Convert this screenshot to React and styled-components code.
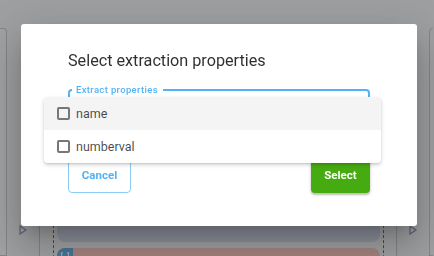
import React from "react";
import styled, { createGlobalStyle } from "styled-components";

const GlobalStyle = createGlobalStyle`
  html, body {
    margin: 0;
    padding: 0;
    width: 434px;
    height: 256px;
    overflow: hidden;
    background: #f3f5f7;
    font-family: Roboto, "Liberation Sans", sans-serif;
  }
  * { box-sizing: border-box; }
`;

const Board = styled.div`
  display: flex;
  height: 256px;
  overflow: hidden;
  padding-top: 28px;
`;

const SideColumn = styled.div`
  width: ${(p) => p.w}px;
  flex-shrink: 0;
  border: 1px solid #c9ccd4;
  border-left: ${(p) => (p.right ? "1px solid #c9ccd4" : "none")};
  border-right: ${(p) => (p.right ? "none" : "1px solid #c9ccd4")};
  border-radius: ${(p) => (p.right ? "4px 0 0 0" : "0 4px 0 0")};
  background: #f7f8fa;
`;

const Connector = styled.div`
  width: 32px;
  flex-shrink: 0;
  display: flex;
  justify-content: center;
  padding-top: 197px;
`;

const Column = styled.div`
  width: 358px;
  flex-shrink: 0;
  border: 1px solid #c9ccd4;
  border-bottom: none;
  border-radius: 4px 4px 0 0;
  background: #f7f8fa;
  padding: 100px 12px 0 13px;
  overflow: hidden;
`;

const Lane = styled.div`
  border-left: 1px dashed #6f737a;
  border-right: 1px dashed #6f737a;
  padding: 21px 3px 0;
  height: 200px;
  display: flex;
  flex-direction: column;
  gap: 6px;
`;

const Card = styled.div`
  height: ${(p) => p.h}px;
  border-radius: 8px;
  background: ${(p) => p.bg};
  flex-shrink: 0;
  display: flex;
  align-items: flex-start;
  overflow: hidden;
`;

const CardIcon = styled.div`
  width: 16px;
  height: 16px;
  background: #6cb6e8;
  display: flex;
  justify-content: center;
  align-items: center;
`;

const Overlay = styled.div`
  position: fixed;
  inset: 0;
  background: rgba(0, 0, 0, 0.35);
  display: flex;
  justify-content: flex-start;
  align-items: flex-start;
  padding: 24px 0 0 21px;
`;

const Dialog = styled.div`
  position: relative;
  width: 396px;
  height: 202px;
  background: #fff;
  border-radius: 3px;
  box-shadow: 0 11px 15px -7px rgba(0, 0, 0, 0.2), 0 24px 38px 3px rgba(0, 0, 0, 0.14),
    0 9px 46px 8px rgba(0, 0, 0, 0.12);
  padding: 24px 47px 33px 47px;
  display: flex;
  flex-direction: column;
`;

const Title = styled.h2`
  margin: 0;
  font-size: 16.2px;
  line-height: 26px;
  font-weight: 400;
  color: rgba(0, 0, 0, 0.82);
`;

const Outline = styled.fieldset`
  margin: 11px 0 0 0;
  height: 60px;
  padding: 0 0 0 2px;
  border: 2px solid #52b3f4;
  border-radius: 4px;
`;

const Legend = styled.legend`
  padding: 0 5px 0 4px;
  font-size: 9.5px;
  line-height: 10px;
  font-weight: 500;
  letter-spacing: 0.35px;
  color: #52b3f4;
`;

const Actions = styled.div`
  margin-top: 12px;
  display: flex;
  justify-content: space-between;
`;

const Button = styled.button`
  height: 36px;
  width: ${(p) => p.w}px;
  border-radius: 4px;
  font-family: Roboto, "Liberation Sans", sans-serif;
  font-size: 11.5px;
  font-weight: 700;
  cursor: pointer;
  border: ${(p) => (p.primary ? "none" : "1px solid #8ccdf7")};
  background: ${(p) => (p.primary ? "#46ab10" : "#fff")};
  color: ${(p) => (p.primary ? "#fff" : "#52b3f4")};
  box-shadow: ${(p) =>
    p.primary
      ? "0 2px 2px rgba(0,0,0,0.2), 0 1px 4px rgba(0,0,0,0.12)"
      : "none"};
`;

const Menu = styled.ul`
  position: absolute;
  left: 23px;
  top: 73px;
  width: 337px;
  margin: 0;
  padding: 0;
  list-style: none;
  background: #fff;
  border-radius: 4px;
  overflow: hidden;
  box-shadow: 0 2px 4px rgba(0, 0, 0, 0.16), 0 1px 2px rgba(0, 0, 0, 0.1);
`;

const Option = styled.li`
  height: 33px;
  display: flex;
  align-items: center;
  gap: 6px;
  padding-left: 13px;
  background: ${(p) => (p.active ? "#f4f4f4" : "#fff")};
  font-size: 12.5px;
  color: rgba(0, 0, 0, 0.72);
`;

const Box = styled.span`
  width: 13px;
  height: 13px;
  border: 2px solid #777;
  border-radius: 2px;
  flex-shrink: 0;
`;

function Triangle() {
  return (
    <svg width="8" height="10" viewBox="0 0 8 10">
      <path d="M1 1 L7 5 L1 9 Z" fill="none" stroke="#8d97b6" strokeWidth="1.2" />
    </svg>
  );
}

function BracketIcon() {
  return (
    <svg width="10" height="10" viewBox="0 0 10 10">
      <path d="M3 2 H1.5 V8 H3 M7 2 H8.5 V8 H7" fill="none" stroke="#fff" strokeWidth="1.3" />
    </svg>
  );
}

export default function App() {
  const options = ["name", "numberval"];
  return (
    <>
      <GlobalStyle />
      <Board>
        <SideColumn w={7} />
        <Connector>
          <Triangle />
        </Connector>
        <Column>
          <Lane>
            <Card h={92} bg="#d9e0f0" />
            <Card h={40} bg="#ffcbc4">
              <CardIcon>
                <BracketIcon />
              </CardIcon>
            </Card>
          </Lane>
        </Column>
        <Connector>
          <Triangle />
        </Connector>
        <SideColumn w={4} right />
      </Board>
      <Overlay>
        <Dialog>
          <Title>Select extraction properties</Title>
          <Outline>
            <Legend>Extract properties</Legend>
          </Outline>
          <Actions>
            <Button w={63}>Cancel</Button>
            <Button w={59} primary>
              Select
            </Button>
          </Actions>
          <Menu>
            {options.map((o, i) => (
              <Option key={o} active={i === 0}>
                <Box />
                {o}
              </Option>
            ))}
          </Menu>
        </Dialog>
      </Overlay>
    </>
  );
}
